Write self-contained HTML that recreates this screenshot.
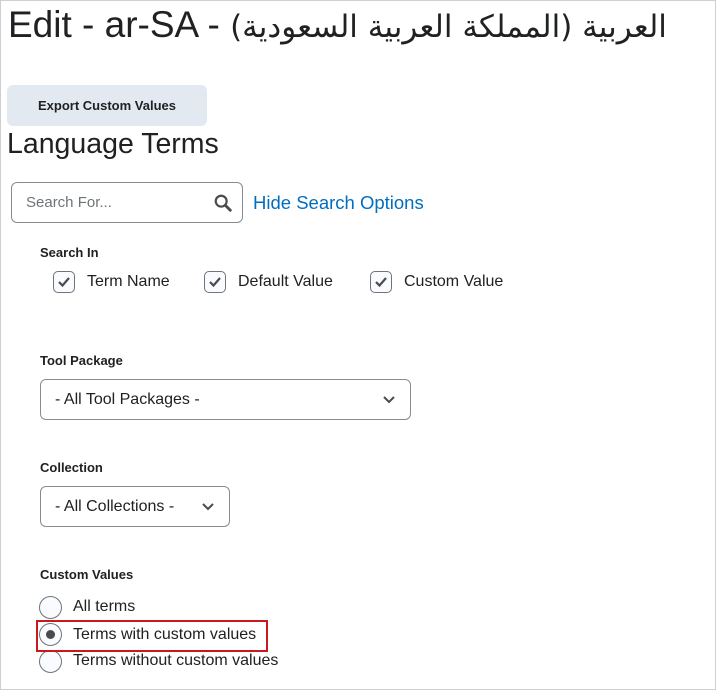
<!DOCTYPE html>
<html><head><meta charset="utf-8"><style>
html,body{margin:0;padding:0;}
body{width:716px;height:690px;position:relative;overflow:hidden;background:#fff;font-family:"Liberation Sans","DejaVu Sans",sans-serif;color:#202122;}
.frame{position:absolute;left:0;top:0;width:714px;height:688px;border:1px solid #cdd0d3;}
.a{position:absolute;white-space:nowrap;}
.lbl{font-weight:bold;font-size:13px;color:#202122;}
.cb{position:absolute;width:20px;height:20px;border:1px solid #6e7477;border-radius:5px;background:#f9fbff;}
.sel{position:absolute;border:1px solid #868c8f;border-radius:6px;height:39px;background:#fff;}
.rad{position:absolute;width:21px;height:21px;border:1px solid #6e7477;border-radius:50%;background:#f9fbff;}
.t15{font-size:16px;color:#202122;}
</style></head><body>
<div class="frame"></div>
<div class="a" style="left:8px;top:4px;font-size:37px;">Edit - ar-SA - <span dir="rtl" style="font-family:'DejaVu Sans',sans-serif;font-size:31px;">العربية (المملكة العربية السعودية)</span></div>
<div class="a" style="left:7px;top:85px;width:200px;height:41px;background:#e3e9f1;border-radius:6px;font-weight:bold;font-size:13px;text-align:center;line-height:41px;">Export Custom Values</div>
<div class="a" style="left:7px;top:128px;font-size:28.5px;">Language Terms</div>
<div class="a" style="left:11px;top:182px;width:230px;height:39px;border:1px solid #868c8f;border-radius:6px;"></div>
<div class="a" style="left:26px;top:194px;font-size:15px;color:#6e7477;">Search For...</div>
<svg class="a" style="left:213px;top:193px" width="20" height="20" viewBox="0 0 22 22"><circle cx="9" cy="9" r="6" fill="none" stroke="#494c4e" stroke-width="2.4"/><path d="M13.5 13.5 L19 19" stroke="#494c4e" stroke-width="3.2" stroke-linecap="round"/></svg>
<div class="a" style="left:253px;top:192px;font-size:18.5px;color:#006fbf;">Hide Search Options</div>
<div class="a lbl" style="left:40px;top:245px;">Search In</div>
<div class="cb" style="left:53px;top:271px"></div>
<div class="cb" style="left:204px;top:271px"></div>
<div class="cb" style="left:370px;top:271px"></div>
<svg class="a" style="left:57px;top:275px" width="14" height="14"><path d="M2 7 L5.5 10.5 L12 3" fill="none" stroke="#494c4e" stroke-width="2.2"/></svg>
<svg class="a" style="left:208px;top:275px" width="14" height="14"><path d="M2 7 L5.5 10.5 L12 3" fill="none" stroke="#494c4e" stroke-width="2.2"/></svg>
<svg class="a" style="left:374px;top:275px" width="14" height="14"><path d="M2 7 L5.5 10.5 L12 3" fill="none" stroke="#494c4e" stroke-width="2.2"/></svg>
<div class="a t15" style="left:87px;top:273px;">Term Name</div>
<div class="a t15" style="left:238px;top:273px;">Default Value</div>
<div class="a t15" style="left:404px;top:273px;">Custom Value</div>
<div class="a lbl" style="left:40px;top:353px;">Tool Package</div>
<div class="sel" style="left:40px;top:379px;width:369px;"></div>
<div class="a t15" style="left:55px;top:391px;">- All Tool Packages -</div>
<svg class="a" style="left:382px;top:395px" width="14" height="10"><path d="M2 2 L7 7 L12 2" fill="none" stroke="#494c4e" stroke-width="2"/></svg>
<div class="a lbl" style="left:40px;top:460px;">Collection</div>
<div class="sel" style="left:40px;top:486px;width:188px;"></div>
<div class="a t15" style="left:55px;top:498px;">- All Collections -</div>
<svg class="a" style="left:201px;top:502px" width="14" height="10"><path d="M2 2 L7 7 L12 2" fill="none" stroke="#494c4e" stroke-width="2"/></svg>
<div class="a lbl" style="left:40px;top:567px;">Custom Values</div>
<div class="rad" style="left:39px;top:596px"></div>
<div class="rad" style="left:39px;top:623px"><div style="position:absolute;left:6px;top:6px;width:9px;height:9px;border-radius:50%;background:#494c4e"></div></div>
<div class="rad" style="left:39px;top:650px"></div>
<div class="a t15" style="left:73px;top:598px;">All terms</div>
<div class="a t15" style="left:73px;top:626px;">Terms with custom values</div>
<div class="a t15" style="left:73px;top:652px;">Terms without custom values</div>
<div class="a" style="left:36px;top:620px;width:228px;height:28px;border:2px solid #c8191f;"></div>
</body></html>
